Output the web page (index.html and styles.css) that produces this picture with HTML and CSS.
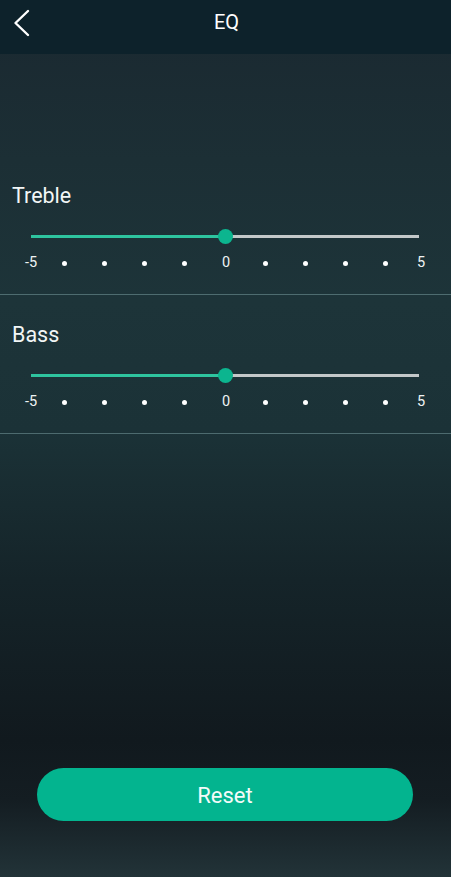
FILE: index.html
```html
<!DOCTYPE html>
<html lang="en">
<head>
<meta charset="utf-8">
<title>EQ</title>
<link rel="stylesheet" href="styles.css">
</head>
<body>
<div class="app">
  <header class="topbar">
    <button class="back" aria-label="Back">
      <svg width="24" height="30" viewBox="0 0 24 30"><path d="M18 3 L5.5 15 L18 27" fill="none" stroke="#ffffff" stroke-width="2.4" stroke-linecap="round" stroke-linejoin="round"/></svg>
    </button>
    <h1 class="title">EQ</h1>
    <span></span>
  </header>
  <main class="content">
    <section class="band">
      <div class="band-name">Treble</div>
      <div class="slider">
        <div class="fill" style="width:194px"></div>
        <div class="rest"></div>
        <span class="thumb" style="left:194px"></span>
      </div>
      <div class="ticks">
        <span class="num">-5</span>
        <span class="dot"></span><span class="dot"></span><span class="dot"></span><span class="dot"></span>
        <span class="num zero">0</span>
        <span class="dot"></span><span class="dot"></span><span class="dot"></span><span class="dot"></span>
        <span class="num">5</span>
      </div>
    </section>
    <section class="band">
      <div class="band-name">Bass</div>
      <div class="slider">
        <div class="fill" style="width:194px"></div>
        <div class="rest"></div>
        <span class="thumb" style="left:194px"></span>
      </div>
      <div class="ticks">
        <span class="num">-5</span>
        <span class="dot"></span><span class="dot"></span><span class="dot"></span><span class="dot"></span>
        <span class="num zero">0</span>
        <span class="dot"></span><span class="dot"></span><span class="dot"></span><span class="dot"></span>
        <span class="num">5</span>
      </div>
    </section>
  </main>
  <div class="actions">
    <button class="reset">Reset</button>
  </div>
</div>
</body>
</html>
```
FILE: styles.css
```css
* { box-sizing: border-box; }
html, body { margin: 0; padding: 0; }
body {
  font-family: Roboto, "Noto Sans", "Liberation Sans", sans-serif;
  color: #eef3f3;
  background: #10181d;
}
.app {
  width: 451px;
  height: 877px;
  display: flex;
  flex-direction: column;
  background: linear-gradient(to bottom,
    #1a2830 0px,
    #1c2f35 160px,
    #1d3439 300px,
    #1b3237 430px,
    #152429 580px,
    #11191e 740px,
    #141d22 800px,
    #223338 877px);
}
.topbar {
  height: 54px;
  flex: none;
  background: #0d222b;
  display: grid;
  grid-template-columns: 1fr auto 1fr;
  align-items: start;
}
.back {
  justify-self: start;
  margin: 8px 0 0 10px;
  padding: 0;
  border: 0;
  background: none;
  width: 24px;
  height: 30px;
  display: flex;
}
.title {
  margin: 10px 0 0 2px;
  font-size: 20px;
  font-weight: 400;
  line-height: 24px;
  color: #ffffff;
}
.content {
  padding-top: 102px;
  flex: none;
}
.band {
  height: 139px;
  border-bottom: 1px solid rgba(140, 178, 180, 0.45);
  padding-top: 28px;
}
.band-name {
  font-size: 21.5px;
  line-height: 24px;
  padding-left: 12px;
  color: #f2f6f6;
}
.slider {
  position: relative;
  margin: 20px 0 0 31px;
  width: 388px;
  height: 16px;
  display: flex;
  align-items: center;
}
.fill {
  height: 3px;
  background: #2ec49f;
  flex: none;
}
.rest {
  height: 3px;
  background: #c3c8c9;
  flex: 1;
}
.thumb {
  position: absolute;
  top: 0.5px;
  width: 15px;
  height: 15px;
  margin-left: -7.5px;
  border-radius: 50%;
  background: #0cb58f;
}
.ticks {
  margin: 11px 0 0 18px;
  display: grid;
  grid-template-columns: 26px repeat(4, 40px) 41px repeat(4, 40px) 32px;
  align-items: center;
  justify-items: center;
  height: 16px;
}
.num {
  font-size: 14.5px;
  line-height: 16px;
  color: #eef3f3;
}
.num.zero {
  padding-left: 3px;
}
.dot {
  width: 5px;
  height: 5px;
  border-radius: 50%;
  background: #ffffff;
}
.actions {
  margin-top: auto;
  padding: 0 38px 56px 37px;
}
.reset {
  width: 100%;
  height: 53px;
  border: 0;
  border-radius: 27px;
  background: #03b48f;
  color: #f4fbf9;
  font-family: Roboto, "Noto Sans", "Liberation Sans", sans-serif;
  font-size: 22px;
  padding: 2px 0 0;
}
```
